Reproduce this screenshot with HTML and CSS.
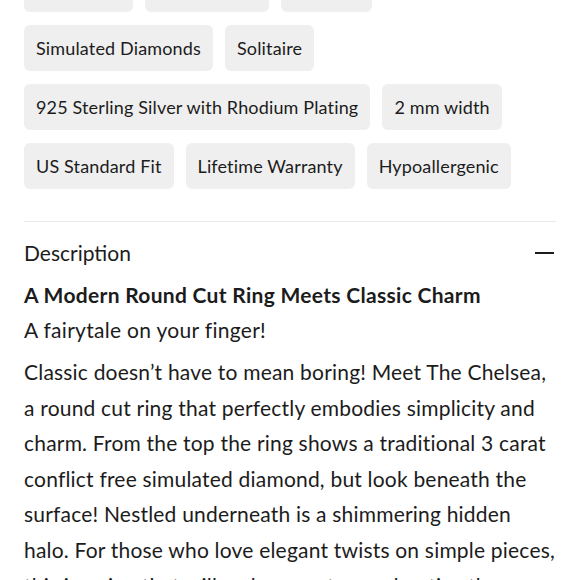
FILE: index.html
```html
<!DOCTYPE html>
<html lang="en">
<head>
<meta charset="utf-8">
<link rel="stylesheet" href="styles.css">
</head>
<body>
<main class="page">
  <ul class="chips">
    <li class="chip">Round Cut</li>
    <li class="chip">Engagement</li>
    <li class="chip">3 Carats</li>
    <li class="chip">Simulated Diamonds</li>
    <li class="chip">Solitaire</li>
    <li class="chip">925 Sterling Silver with Rhodium Plating</li>
    <li class="chip">2 mm width</li>
    <li class="chip">US Standard Fit</li>
    <li class="chip">Lifetime Warranty</li>
    <li class="chip">Hypoallergenic</li>
  </ul>
  <section class="desc">
    <div class="desc-head">
      <span class="desc-title">Description</span>
      <span class="minus"></span>
    </div>
    <h2 class="desc-heading">A Modern Round Cut Ring Meets Classic Charm</h2>
    <p class="desc-sub">A fairytale on your finger!</p>
    <p class="desc-body">Classic doesn’t have to mean boring! Meet The Chelsea, a round cut ring that perfectly embodies simplicity and charm. From the top the ring shows a traditional 3 carat conflict free simulated diamond, but look beneath the surface! Nestled underneath is a shimmering hidden halo. For those who love elegant twists on simple pieces, this is a ring that will make you stop and notice the details.</p>
  </section>
</main>
</body>
</html>
```
FILE: styles.css
```css
html, body {
  margin: 0;
  padding: 0;
  background: #ffffff;
}
body {
  font-family: "Lato", "Noto Sans", sans-serif;
  color: #1c1c1c;
  overflow: hidden;
}
.page {
  padding: 0 24px;
}
.chips {
  list-style: none;
  margin: -34px 0 0 0;
  padding: 0 0 32px 0;
  display: flex;
  flex-wrap: wrap;
  gap: 13px 12px;
  border-bottom: 1px solid #e9e9e9;
}
.chip {
  background: #efefef;
  border-radius: 6px;
  height: 46px;
  display: flex;
  align-items: center;
  padding: 0 12px;
  font-size: 18px;
  letter-spacing: 0.15px;
  white-space: nowrap;
}
.desc-head {
  display: flex;
  justify-content: space-between;
  align-items: center;
  height: 61px;
}
.desc-title {
  font-size: 21px;
}
.minus {
  width: 19px;
  height: 2px;
  background: #1c1c1c;
  margin-right: 2px;
}
.desc-heading {
  margin: 0;
  font-size: 21px;
  font-weight: 700;
  letter-spacing: 0.3px;
  line-height: 24px;
}
.desc-sub {
  margin: 11px 0 0 0;
  font-size: 21px;
  letter-spacing: 0.3px;
  line-height: 24px;
}
.desc-body {
  margin: 12px 0 0 0;
  font-size: 21px;
  letter-spacing: 0.2px;
  line-height: 35.6px;
}
```
